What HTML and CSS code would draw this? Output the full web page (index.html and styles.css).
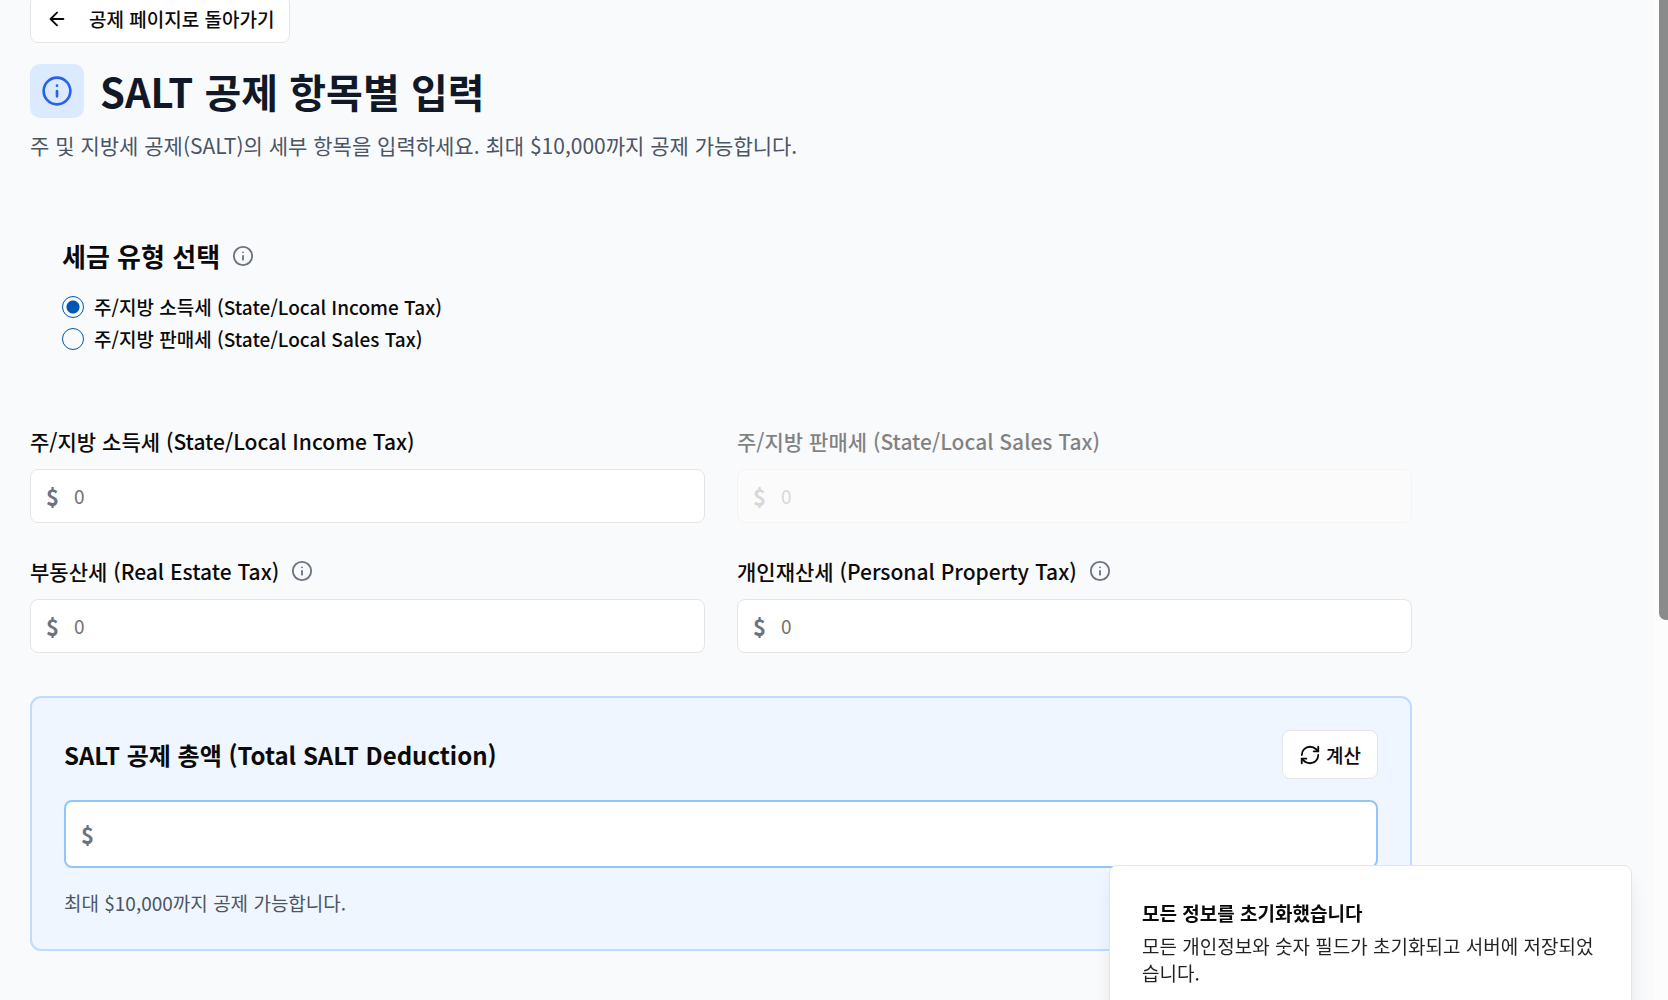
FILE: index.html
```html
<!DOCTYPE html>
<html lang="ko">
<head>
<meta charset="utf-8">
<meta name="viewport" content="width=device-width, initial-scale=1">
<title>SALT 공제 항목별 입력</title>
<link rel="stylesheet" href="styles.css">
</head>
<body>
<svg class="sprite" aria-hidden="true">
  <symbol id="info" viewBox="0 0 24 24"><circle cx="12" cy="12" r="10"/><path d="M12 16v-4M12 8h.01"/></symbol>
  <symbol id="arrow-left" viewBox="0 0 24 24"><path d="m12 19-7-7 7-7M19 12H5"/></symbol>
  <symbol id="refresh" viewBox="0 0 24 24"><path d="M3 12a9 9 0 0 1 9-9 9.75 9.75 0 0 1 6.74 2.74L21 8"/><path d="M21 3v5h-5"/><path d="M21 12a9 9 0 0 1-9 9 9.75 9.75 0 0 1-6.74-2.74L3 16"/><path d="M8 16H3v5"/></symbol>
</svg>
<div class="page">
  <main class="content">
    <header class="page-header">
      <button type="button" class="button button-back"><svg class="icon icon-small"><use href="#arrow-left"/></svg>공제 페이지로 돌아가기</button>
      <div class="title-row">
        <span class="title-badge"><svg class="icon icon-large"><use href="#info"/></svg></span>
        <h1>SALT 공제 항목별 입력</h1>
      </div>
      <p class="lead">주 및 지방세 공제(SALT)의 세부 항목을 입력하세요. 최대 $10,000까지 공제 가능합니다.</p>
    </header>

    <form>
      <section class="tax-type" role="radiogroup" aria-labelledby="tax-type-title">
        <div class="label-row">
          <h2 id="tax-type-title">세금 유형 선택</h2>
          <svg class="icon icon-small icon-info"><use href="#info"/></svg>
        </div>
        <div class="options">
          <label class="option"><input type="radio" name="tax-type" checked>주/지방 소득세 (State/Local Income Tax)</label>
          <label class="option"><input type="radio" name="tax-type">주/지방 판매세 (State/Local Sales Tax)</label>
        </div>
      </section>

      <div class="fields">
        <div class="field">
          <div class="label-row"><label for="income">주/지방 소득세 (State/Local Income Tax)</label></div>
          <div class="amount"><span class="currency">$</span><input id="income" type="text" inputmode="decimal" placeholder="0"></div>
        </div>
        <div class="field field-disabled">
          <div class="label-row"><label for="sales">주/지방 판매세 (State/Local Sales Tax)</label></div>
          <div class="amount"><span class="currency">$</span><input id="sales" type="text" inputmode="decimal" placeholder="0" disabled></div>
        </div>
        <div class="field">
          <div class="label-row"><label for="estate">부동산세 (Real Estate Tax)</label><svg class="icon icon-small icon-info"><use href="#info"/></svg></div>
          <div class="amount"><span class="currency">$</span><input id="estate" type="text" inputmode="decimal" placeholder="0"></div>
        </div>
        <div class="field">
          <div class="label-row"><label for="property">개인재산세 (Personal Property Tax)</label><svg class="icon icon-small icon-info"><use href="#info"/></svg></div>
          <div class="amount"><span class="currency">$</span><input id="property" type="text" inputmode="decimal" placeholder="0"></div>
        </div>
      </div>

      <section class="total">
        <div class="total-header">
          <label class="total-label" for="total">SALT 공제 총액 (Total SALT Deduction)</label>
          <button type="button" class="button button-calc"><svg class="icon icon-small"><use href="#refresh"/></svg>계산</button>
        </div>
        <div class="amount amount-total"><span class="currency">$</span><input id="total" type="text" readonly></div>
        <p class="note">최대 $10,000까지 공제 가능합니다.</p>
      </section>
    </form>
  </main>
</div>
<div class="scroll-track" aria-hidden="true"><div class="scroll-thumb"></div></div>
<div class="toast" role="status">
  <p class="toast-title">모든 정보를 초기화했습니다</p>
  <p class="toast-text">모든 개인정보와 숫자 필드가 초기화되고 서버에 저장되었습니다.</p>
</div>
</body>
</html>
```

FILE: styles.css
```css
* { box-sizing: border-box; margin: 0; }

body {
  background: #f9fafb;
  color: #0c0a09;
  font-family: "Noto Sans CJK KR", sans-serif;
  font-size: 19px;
  line-height: 28px;
  overflow: hidden;
}

button, input { font: inherit; color: inherit; }

.sprite { display: none; }

.icon {
  flex: none;
  fill: none;
  stroke: currentColor;
  stroke-width: 2;
  stroke-linecap: round;
  stroke-linejoin: round;
}
.icon-small { width: 22px; height: 22px; }
.icon-large { width: 32px; height: 32px; }
.icon-info { color: #6b7280; }

.page {
  min-height: 100vh;
  padding: 0 44px 48px 30px;
  background: #f9fafc;
}

.content { max-width: 1382px; }

/* The page is scrolled slightly, so the header starts above the fold. */
.page-header { margin-top: -5px; }

.button {
  display: inline-flex;
  align-items: center;
  background: #fff;
  border: 1px solid #e7e5e4;
  border-radius: 8px;
  font-size: 19px;
  font-weight: 500;
}
.button-back { height: 48px; padding: 0 15px; gap: 21px; }
.button-calc { height: 49px; padding: 0 16px; gap: 5px; }

.title-row {
  display: flex;
  align-items: center;
  gap: 16px;
  margin-top: 21px;
}
.title-badge {
  display: flex;
  align-items: center;
  justify-content: center;
  width: 54px;
  height: 54px;
  border-radius: 10px;
  background: #dbeafe;
  color: #2563eb;
}
h1 { font-size: 40px; line-height: 54px; font-weight: 700; color: #111827; }
.lead { margin-top: 11px; font-size: 21px; line-height: 32px; color: #4b5563; }

.tax-type { margin-top: 44px; padding: 32px; }
.label-row { display: flex; align-items: center; gap: 12px; }
h2 { font-size: 26px; line-height: 38px; font-weight: 600; }
.options { display: grid; gap: 4px; margin-top: 18px; }
.option { display: flex; align-items: center; gap: 10px; font-weight: 500; }
.option input {
  appearance: none;
  flex: none;
  width: 22px;
  height: 22px;
  margin: 0;
  border: 1px solid #0056b3;
  border-radius: 50%;
}
.option input:checked { background: radial-gradient(circle, #0056b3 6px, transparent 7px); }

.fields {
  display: grid;
  grid-template-columns: 1fr 1fr;
  gap: 32px;
  margin-top: 40px;
}
.field .label-row { height: 32px; margin-bottom: 12px; font-size: 21px; font-weight: 500; }
.amount {
  display: flex;
  align-items: center;
  gap: 15px;
  height: 54px;
  padding: 0 15px;
  border: 1px solid #e7e5e4;
  border-radius: 8px;
  background: #fff;
}
.amount input {
  flex: 1;
  min-width: 0;
  padding: 0;
  border: 0;
  outline: 0;
  background: none;
}
.amount input::placeholder { color: #78716c; opacity: 1; }
.currency { font-size: 22px; font-weight: 700; color: #6b7280; }
.field-disabled label { opacity: 0.5; }
.field-disabled .amount { border-color: #f4f4f4; background: #fbfbfb; }
.field-disabled .currency, .field-disabled input { opacity: 0.25; }

.total {
  margin-top: 43px;
  padding: 32px;
  border: 2px solid #bfdbfe;
  border-radius: 11px;
  background: #eff6ff;
}
.total-header { display: flex; align-items: center; justify-content: space-between; gap: 16px; }
.total-label { font-size: 24px; line-height: 32px; font-weight: 600; }
.amount-total { height: 68px; margin-top: 21px; border: 2px solid #93c5fd; }
.note { margin-top: 21px; line-height: 28px; color: #4b5563; }

.scroll-track {
  position: fixed;
  top: 0;
  right: 0;
  bottom: 0;
  width: 14px;
  background: #fcfcfc;
}
.scroll-thumb {
  height: 62%;
  margin-left: 5px;
  border-bottom-left-radius: 7px;
  background: #8b8b8b;
}

.toast {
  position: fixed;
  right: 36px;
  bottom: -19px;
  width: 523px;
  padding: 33px 32px 32px;
  border: 1px solid #e7e5e4;
  border-radius: 8px;
  background: #fff;
  box-shadow: 0 14px 20px -4px rgb(0 0 0 / 10%), 0 5px 8px -5px rgb(0 0 0 / 10%);
}
.toast-title { font-weight: 600; }
.toast-text { margin-top: 5px; line-height: 27px; opacity: 0.9; }
```
